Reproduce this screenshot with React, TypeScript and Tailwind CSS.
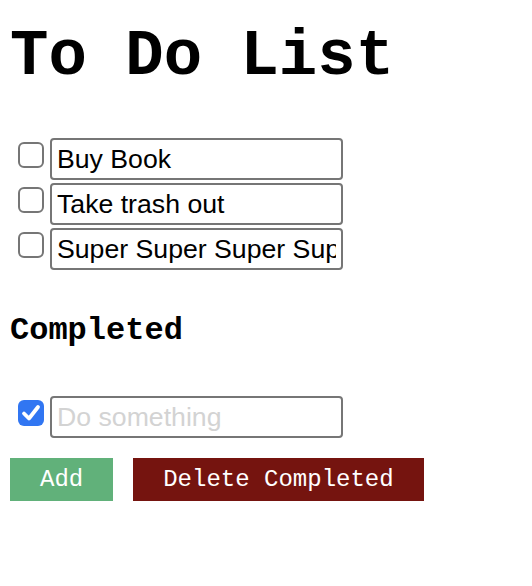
import { useState } from 'react'

type Todo = { id: number; text: string; done: boolean }

const initialTodos: Todo[] = [
    { id: 1, text: 'Buy Book', done: false },
    { id: 2, text: 'Take trash out', done: false },
    { id: 3, text: 'Super Super Super Super Super Long Task', done: false },
]

function CheckBox({ checked, onChange }: { checked: boolean; onChange: () => void }) {
    return (
        <label className="relative ml-[8px] mr-[6px] mt-[4px] w-[26px] h-[26px] shrink-0 cursor-pointer">
            <input
                type="checkbox"
                checked={checked}
                onChange={onChange}
                className={`appearance-none block w-[26px] h-[26px] rounded-[6px] m-0 ${
                    checked ? 'bg-[#3176f2]' : 'bg-white border-2 border-[#767676]'
                }`}
            />
            {checked && (
                <svg className="absolute inset-0 pointer-events-none" width="26" height="26" viewBox="0 0 26 26" fill="none">
                    <path d="M6 13.5 L11 18.5 L20 7" stroke="white" strokeWidth="3.8" strokeLinecap="round" strokeLinejoin="round" />
                </svg>
            )}
        </label>
    )
}

function TodoRow({ todo, onToggle, onChange, placeholder }: { todo: Todo; onToggle: () => void; onChange: (v: string) => void; placeholder?: string }) {
    return (
        <div className="flex items-start h-[42px]">
            <CheckBox checked={todo.done} onChange={onToggle} />
            <input
                type="text"
                value={todo.text}
                placeholder={placeholder}
                onChange={(e) => onChange(e.target.value)}
                className="w-[293px] h-[42px] border-2 border-[#767676] rounded-[4px] px-[5px] text-[26.67px] text-black placeholder:text-[#d3d3d3] outline-none font-['Liberation_Sans',Arial,sans-serif]"
            />
        </div>
    )
}

export default function App() {
    const [todos, setTodos] = useState<Todo[]>(initialTodos)
    const [completed, setCompleted] = useState<Todo[]>([{ id: 99, text: '', done: true }])

    const toggle = (id: number) => setTodos(todos.map((t) => (t.id === id ? { ...t, done: !t.done } : t)))
    const edit = (id: number, text: string) => setTodos(todos.map((t) => (t.id === id ? { ...t, text } : t)))

    return (
        <div className="px-[10px] pt-[21px] font-['Courier_New',Courier,'Nimbus_Mono_PS',FreeMono,'Liberation_Mono',monospace] text-black bg-white min-h-[586px]">
            <h1 className="text-[64px] leading-[72px] font-bold">To Do List</h1>

            {/* open tasks */}
            <div className="mt-[45px] flex flex-col gap-[3px]">
                {todos.map((todo) => (
                    <TodoRow
                        key={todo.id}
                        todo={todo}
                        onToggle={() => toggle(todo.id)}
                        onChange={(v) => edit(todo.id, v)}
                    />
                ))}
            </div>

            <h3 className="mt-[43px] text-[32px] leading-[36px] font-bold">Completed</h3>

            <div className="mt-[47px] flex flex-col gap-[3px]">
                {completed.map((todo) => (
                    <TodoRow
                        key={todo.id}
                        todo={todo}
                        placeholder="Do something"
                        onToggle={() => setCompleted(completed.map((t) => (t.id === todo.id ? { ...t, done: !t.done } : t)))}
                        onChange={(v) => setCompleted(completed.map((t) => (t.id === todo.id ? { ...t, text: v } : t)))}
                    />
                ))}
            </div>

            <div className="mt-[20px] flex gap-[20px]">
                <button className="h-[43px] px-[30px] bg-[#61b17a] text-white text-[24px] leading-[27px]">
                    Add
                </button>
                <button
                    className="h-[43px] px-[30px] bg-[#75140f] text-white text-[24px] leading-[27px]"
                    onClick={() => setCompleted([])}
                >
                    Delete Completed
                </button>
            </div>
        </div>
    )
}
